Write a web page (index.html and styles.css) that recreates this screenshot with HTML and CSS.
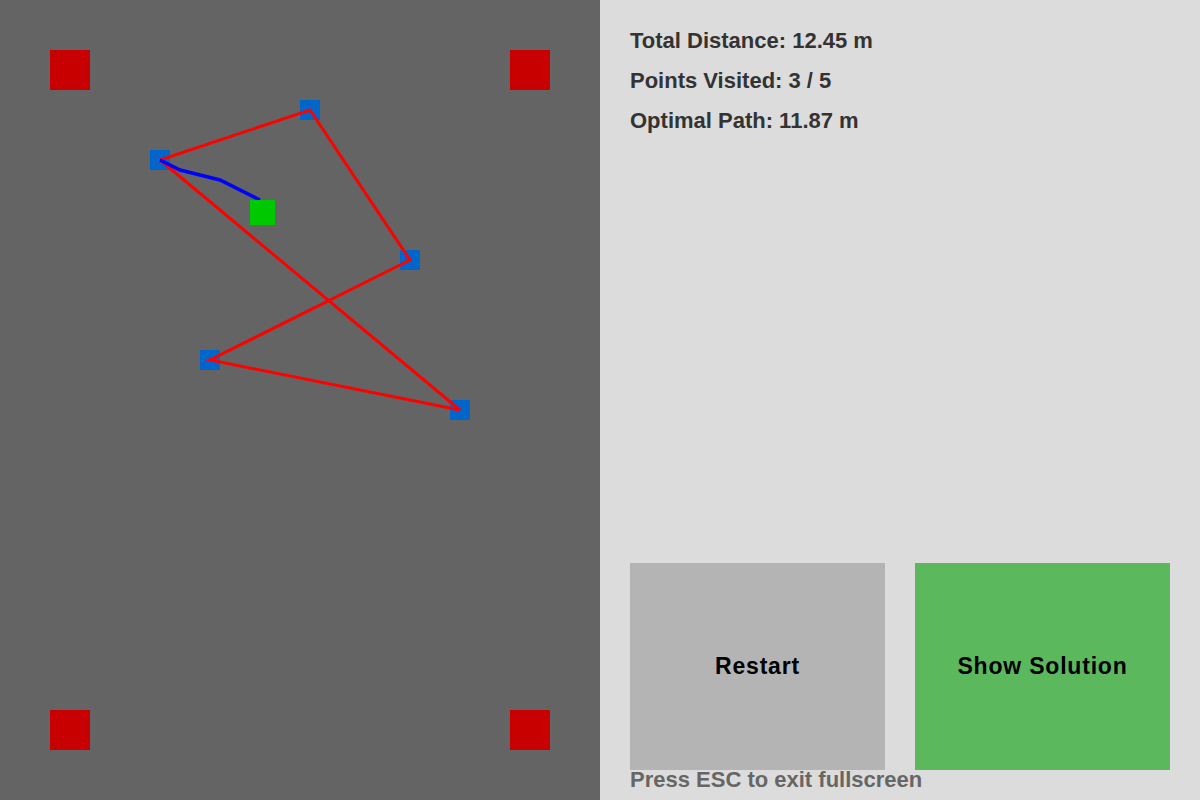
FILE: index.html
```html
<!DOCTYPE html>
<html>
<head>
<meta charset="utf-8">
<link rel="stylesheet" href="styles.css">
</head>
<body>
<div class="app">
  <svg class="board" width="600" height="800" viewBox="0 0 600 800">
    <rect x="0" y="0" width="600" height="800" fill="#646464"/>
    <rect x="50" y="50" width="40" height="40" fill="#c80000"/>
    <rect x="510" y="50" width="40" height="40" fill="#c80000"/>
    <rect x="50" y="710" width="40" height="40" fill="#c80000"/>
    <rect x="510" y="710" width="40" height="40" fill="#c80000"/>
    <rect x="150" y="150" width="20" height="20" fill="#0066cc"/>
    <rect x="300" y="100" width="20" height="20" fill="#0066cc"/>
    <rect x="400" y="250" width="20" height="20" fill="#0066cc"/>
    <rect x="200" y="350" width="20" height="20" fill="#0066cc"/>
    <rect x="450" y="400" width="20" height="20" fill="#0066cc"/>
    <polyline points="160,160 310,110 410,260 210,360 460,410 160,160" fill="none" stroke="#ff0000" stroke-width="3" stroke-linejoin="miter"/>
    <polyline points="160,160 180,170 220,180 260,200" fill="none" stroke="#0000ff" stroke-width="3.5"/>
    <rect x="250" y="200" width="25" height="25" fill="#00c800"/>
  </svg>
  <div class="panel">
    <div class="stats">
      <div class="stat">Total Distance: 12.45 m</div>
      <div class="stat">Points Visited: 3 / 5</div>
      <div class="stat">Optimal Path: 11.87 m</div>
    </div>
    <div class="buttons">
      <div class="btn btn-gray">Restart</div>
      <div class="btn btn-green">Show Solution</div>
    </div>
    <div class="hint">Press ESC to exit fullscreen</div>
  </div>
</div>
</body>
</html>
```
FILE: styles.css
```css
html, body {
  margin: 0;
  padding: 0;
  width: 1200px;
  height: 800px;
  overflow: hidden;
}
body {
  font-family: "Liberation Sans", Arial, sans-serif;
  font-weight: bold;
  font-size: 22px;
}
.app {
  display: flex;
  width: 1200px;
  height: 800px;
}
.board {
  display: block;
  flex: 0 0 600px;
}
.panel {
  flex: 1;
  background: #dcdcdc;
  display: flex;
  flex-direction: column;
  padding: 21px 30px 10px 30px;
}
.stat {
  line-height: 40px;
  color: #333333;
}
.buttons {
  margin-top: auto;
  display: flex;
  gap: 30px;
}
.btn {
  width: 255px;
  height: 207px;
  display: flex;
  align-items: center;
  justify-content: center;
  color: #000;
  font-size: 23px;
  letter-spacing: 0.8px;
}
.btn-gray { background: #b4b4b4; }
.btn-green { background: #5cb85c; }
.hint {
  line-height: 20px;
  color: #666666;
}
```
